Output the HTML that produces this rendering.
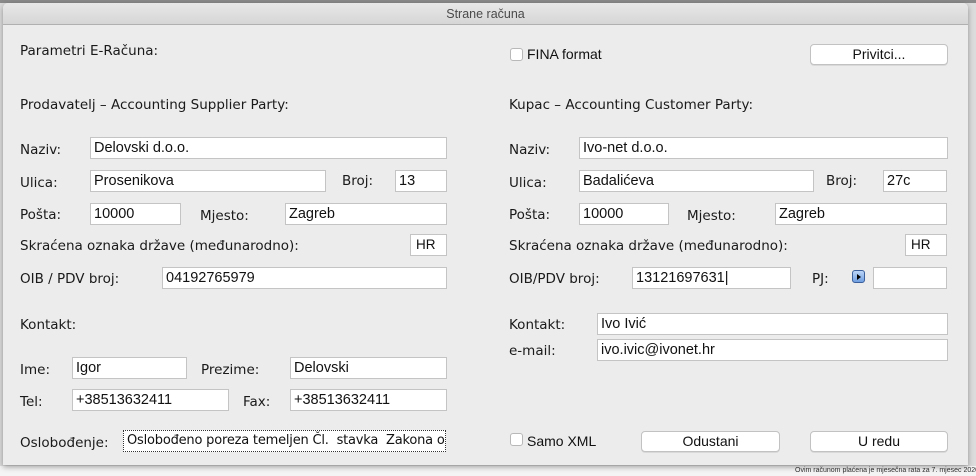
<!DOCTYPE html>
<html><head><meta charset="utf-8"><style>
body{margin:0;width:976px;height:476px;overflow:hidden;background:#dcdcdc;position:relative;font-family:"DejaVu Sans","Liberation Sans",sans-serif;}
.bg{position:absolute;left:0;top:0;width:976px;height:3px;background:#8a8a8a}
.bot{position:absolute;left:0;top:466px;width:976px;height:10px;background:#f4f4f4}
.botline{position:absolute;left:0;top:466px;width:976px;font:7px "Liberation Sans",sans-serif;color:#333;white-space:nowrap}
.win{position:absolute;left:3px;top:3px;width:965px;height:462px;background:#ececec;border-radius:5px 5px 0 0;box-shadow:0 2px 6px rgba(0,0,0,.35);overflow:hidden}
.tb{position:absolute;left:0;top:0;width:100%;height:21px;background:linear-gradient(#e8e8e8,#d6d6d6);border-bottom:1px solid #b0b0b0;text-align:center;font:12.5px "Liberation Sans",sans-serif;color:#4a4a4a;line-height:22px}
.l{position:absolute;font-size:13.5px;color:#1a1a1a;white-space:nowrap;line-height:16px}
.i{position:absolute;background:#fff;border:1px solid #c4c4c4;box-sizing:border-box;height:22px;font:14.5px "Liberation Sans",sans-serif;color:#111;padding-left:3px;line-height:20px;white-space:nowrap;overflow:hidden}
.b{position:absolute;background:#fff;border:1px solid #c2c2c2;border-radius:4px;box-sizing:border-box;height:21px;font:14px "Liberation Sans",sans-serif;text-align:center;line-height:19px;color:#111;box-shadow:0 1px 0 rgba(0,0,0,.08)}
.c{position:absolute;width:13px;height:13px;background:#fff;border:1px solid #b8b8b8;border-radius:3px;box-sizing:border-box}
.ct{position:absolute;font:14px "Liberation Sans",sans-serif;color:#111;line-height:16px;white-space:nowrap}
</style></head><body>
<div class="bg"></div>
<div class="bot"></div>
<div class="botline" style="left:795px;top:467px">Ovim računom plaćena je mjesečna rata za 7. mjesec 2020. godine.</div>
<div class="win">
<div class="tb">Strane računa</div>
</div>
<div style="position:absolute;left:0;top:0">
<div class="l" style="left:20px;top:43px">Parametri E-Računa:</div>
<div class="l" style="left:20px;top:97px">Prodavatelj – Accounting Supplier Party:</div>
<div class="l" style="left:20px;top:142px">Naziv:</div><div class="i" style="left:90px;top:137px;width:357px">Delovski d.o.o.</div>
<div class="l" style="left:20px;top:175px">Ulica:</div><div class="i" style="left:90px;top:170px;width:236px">Prosenikova</div>
<div class="l" style="left:342px;top:173px">Broj:</div><div class="i" style="left:395px;top:170px;width:52px">13</div>
<div class="l" style="left:20px;top:207px">Pošta:</div><div class="i" style="left:90px;top:203px;width:91px">10000</div>
<div class="l" style="left:200px;top:208px">Mjesto:</div><div class="i" style="left:285px;top:203px;width:162px">Zagreb</div>
<div class="l" style="left:20px;top:238px">Skraćena oznaka države (međunarodno):</div><div class="i" style="left:410px;top:234px;width:37px;font-size:13.5px;padding-left:5px">HR</div>
<div class="l" style="left:20px;top:271px">OIB / PDV broj:</div><div class="i" style="left:162px;top:267px;width:285px">04192765979</div>
<div class="l" style="left:20px;top:317px">Kontakt:</div>
<div class="l" style="left:20px;top:362px">Ime:</div><div class="i" style="left:72px;top:357px;width:115px">Igor</div>
<div class="l" style="left:201px;top:362px">Prezime:</div><div class="i" style="left:290px;top:357px;width:157px">Delovski</div>
<div class="l" style="left:20px;top:394px">Tel:</div><div class="i" style="left:72px;top:389px;width:157px">+38513632411</div>
<div class="l" style="left:243px;top:394px">Fax:</div><div class="i" style="left:290px;top:389px;width:157px">+38513632411</div>
<div class="l" style="left:20px;top:435px">Oslobođenje:</div><div class="i" style="left:123px;top:430px;width:323px;border:1px dotted #333;font-family:'DejaVu Sans',sans-serif;font-size:13px;letter-spacing:-0.2px">Oslobođeno poreza temeljen Čl.&nbsp; stavka&nbsp; Zakona o</div>

<div class="c" style="left:510px;top:48px"></div><div class="ct" style="left:527px;top:46px">FINA format</div>
<div class="b" style="left:810px;top:44px;width:138px">Privitci...</div>
<div class="l" style="left:509px;top:97px">Kupac – Accounting Customer Party:</div>
<div class="l" style="left:509px;top:142px">Naziv:</div><div class="i" style="left:579px;top:137px;width:369px">Ivo-net d.o.o.</div>
<div class="l" style="left:509px;top:175px">Ulica:</div><div class="i" style="left:579px;top:170px;width:235px">Badalićeva</div>
<div class="l" style="left:826px;top:173px">Broj:</div><div class="i" style="left:883px;top:170px;width:64px">27c</div>
<div class="l" style="left:509px;top:207px">Pošta:</div><div class="i" style="left:579px;top:203px;width:90px">10000</div>
<div class="l" style="left:687px;top:208px">Mjesto:</div><div class="i" style="left:775px;top:203px;width:172px">Zagreb</div>
<div class="l" style="left:509px;top:238px">Skraćena oznaka države (međunarodno):</div><div class="i" style="left:905px;top:234px;width:42px;font-size:13.5px;padding-left:5px">HR</div>
<div class="l" style="left:509px;top:271px">OIB/PDV broj:</div><div class="i" style="left:632px;top:267px;width:159px">13121697631|</div>
<div class="l" style="left:812px;top:271px">PJ:</div>
<div style="position:absolute;left:852px;top:270px;width:13px;height:13px;border-radius:3px;border:1px solid #3a5f9a;box-sizing:border-box;background:linear-gradient(#bcd6f7,#6f9fe0)"><div style="position:absolute;left:4px;top:3px;width:0;height:0;border-left:4px solid #000;border-top:3px solid transparent;border-bottom:3px solid transparent"></div></div>
<div class="i" style="left:873px;top:267px;width:74px"></div>
<div class="l" style="left:509px;top:317px">Kontakt:</div><div class="i" style="left:597px;top:313px;width:351px">Ivo Ivić</div>
<div class="l" style="left:509px;top:343px">e-mail:</div><div class="i" style="left:597px;top:339px;width:351px">ivo.ivic@ivonet.hr</div>
<div class="c" style="left:510px;top:433px"></div><div class="ct" style="left:527px;top:433px">Samo XML</div>
<div class="b" style="left:641px;top:431px;width:139px">Odustani</div>
<div class="b" style="left:810px;top:431px;width:138px">U redu</div>
</div>
</body></html>
